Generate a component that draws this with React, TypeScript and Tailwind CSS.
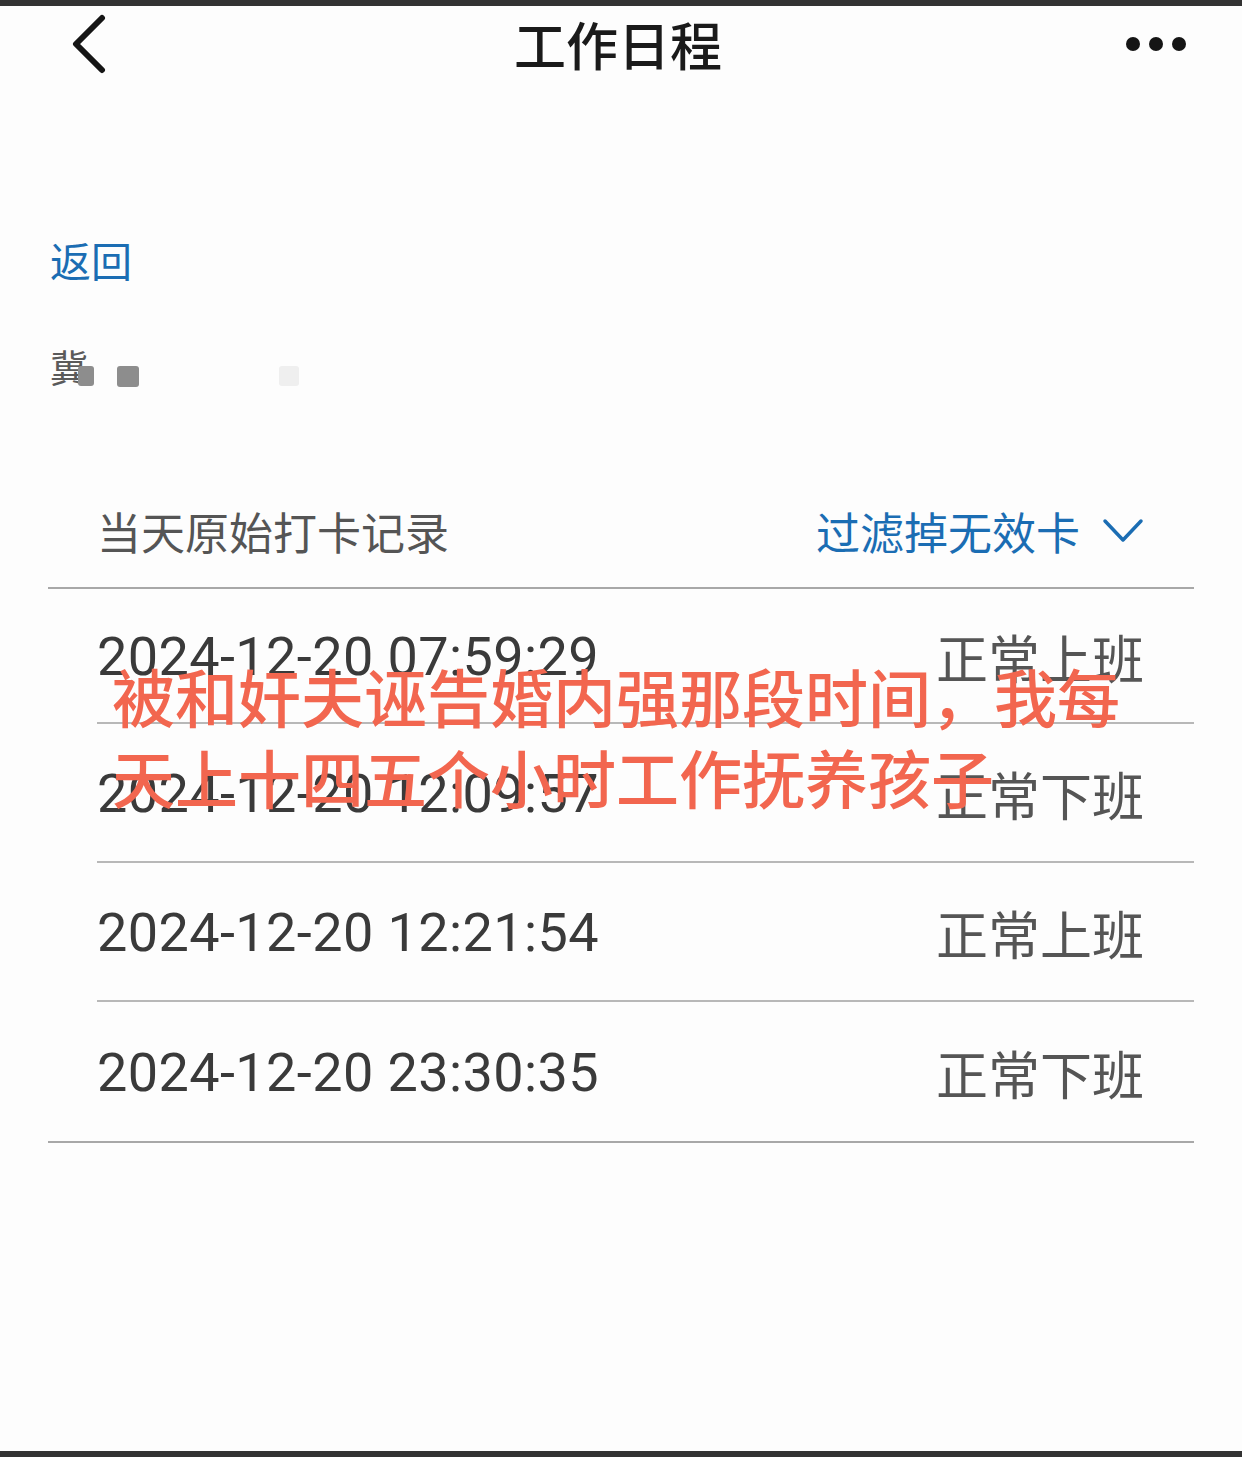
const records = [
  { time: "2024-12-20 07:59:29", status: "正常上班" },
  { time: "2024-12-20 12:09:57", status: "正常下班" },
  { time: "2024-12-20 12:21:54", status: "正常上班" },
  { time: "2024-12-20 23:30:35", status: "正常下班" },
];

const cjk = "font-['Noto_Sans_CJK_SC','Noto_Sans',sans-serif]";

export default function App() {
  return (
    <div
      className={`relative flex min-h-[1457px] w-[1242px] flex-col bg-[#fdfdfd] ${cjk}`}
    >
      {/* 상단 바 */}
      <div className="h-[6px] bg-[#333333]" />

      <header className="flex h-[76px] items-center justify-between pl-[66px] pr-[56px]">
        <svg width="44" height="60" viewBox="0 0 44 60" className="text-[#151515]">
          <path
            d="M36 4 L10 30 L36 56"
            fill="none"
            stroke="currentColor"
            strokeWidth="6"
            strokeLinecap="round"
            strokeLinejoin="round"
          />
        </svg>
        <h1 className="text-[52px] font-medium leading-none text-[#1a1a1a]">
          工作日程
        </h1>
        <div className="flex items-center gap-[9px]">
          <span className="h-[14px] w-[14px] rounded-full bg-[#151515]" />
          <span className="h-[14px] w-[14px] rounded-full bg-[#151515]" />
          <span className="h-[14px] w-[14px] rounded-full bg-[#151515]" />
        </div>
      </header>

      <div className="mt-[153px] pl-[50px] text-[41px] leading-[48px] text-[#1b6db3]">
        返回
      </div>

      <div className="mt-[59px] flex h-[48px] items-center pl-[50px]">
        <span className="text-[38px] leading-none text-[#5a5a5a]">冀</span>
        <span className="ml-[-10px] mt-[20px] h-[20px] w-[16px] rounded-[3px] bg-[#8d8d8d]" />
        <span className="ml-[23px] mt-[20px] h-[21px] w-[22px] rounded-[3px] bg-[#8d8d8d]" />
        <span className="ml-[140px] mt-[20px] h-[20px] w-[20px] rounded-[3px] bg-[#efefef]" />
      </div>

      <section className="mx-[48px] mt-[87px]">
        <div className="flex h-[112px] items-center justify-between border-b-2 border-[#a8a8a8] pb-[2px] pl-[49px] pr-[50px]">
          <span className="text-[44px] leading-none text-[#555555]">
            当天原始打卡记录
          </span>
          <div className="flex items-center gap-[22px] text-[#1b6db3]">
            <span className="text-[44px] leading-none">过滤掉无效卡</span>
            <svg width="42" height="28" viewBox="0 0 42 28">
              <path
                d="M3 4 L21 23 L39 4"
                fill="none"
                stroke="currentColor"
                strokeWidth="3.5"
                strokeLinecap="round"
                strokeLinejoin="round"
              />
            </svg>
          </div>
        </div>

        <div className="border-b-2 border-[#a8a8a8]">
          {records.map((r, i) => (
            <div
              key={r.time}
              className={`ml-[49px] flex items-center justify-between pt-[2px] pr-[50px] ${
                i === 0 ? "h-[135px]" : "h-[139px]"
              } ${i < records.length - 1 ? "border-b-2 border-[#b8b8b8]" : ""}`}
            >
              <span className="font-['Roboto',sans-serif] text-[54px] leading-none tracking-[0.4px] text-[#3a3a3a]">
                {r.time}
              </span>
              <span className="text-[52px] leading-none text-[#555555]">
                {r.status}
              </span>
            </div>
          ))}
        </div>
      </section>

      <div className="flex-1" />
      <div className="h-[6px] bg-[#333333]" />

      {/* 덧씌운 문구 */}
      <div className="pointer-events-none absolute left-[112px] top-[654px] text-[63px] font-medium leading-[81px] text-[#f2664f]">
        <div>被和奸夫诬告婚内强那段时间，我每</div>
        <div>天上十四五个小时工作抚养孩子</div>
      </div>
    </div>
  );
}
